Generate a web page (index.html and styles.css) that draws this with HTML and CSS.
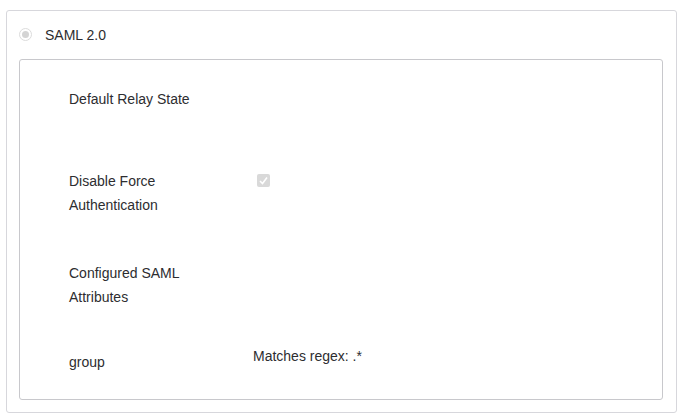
FILE: index.html
```html
<!DOCTYPE html>
<html>
<head>
<meta charset="utf-8">
<link rel="stylesheet" href="styles.css">
</head>
<body>
<div class="outer">
  <div class="head">
    <span class="radio"><span class="dot"></span></span>
    <span class="title">SAML 2.0</span>
  </div>
  <div class="inner">
    <div class="row r1">
      <div class="label">Default Relay State</div>
      <div class="value"></div>
    </div>
    <div class="row r2">
      <div class="label">Disable Force<br>Authentication</div>
      <div class="value"><span class="check"><svg width="11" height="11" viewBox="0 0 11 11"><path d="M2 6 L4.5 8.5 L9 2.5" fill="none" stroke="#fff" stroke-width="1.6"/></svg></span></div>
    </div>
    <div class="row r3">
      <div class="label">Configured SAML<br>Attributes</div>
      <div class="value"></div>
    </div>
    <div class="row r4">
      <div class="label g">group</div>
      <div class="value m">Matches regex: .*</div>
    </div>
  </div>
</div>
</body>
</html>
```
FILE: styles.css
```css
html, body { margin: 0; padding: 0; background: #fff; }
body {
  font-family: "Liberation Sans", Arial, sans-serif;
  color: #2d2d30;
  font-size: 14px;
  padding: 10px 9px 6px 6px;
}
.outer {
  border: 1px solid #d7d7dc;
  border-radius: 3px;
  height: 403px;
  box-sizing: border-box;
  padding: 0 13px 0 12px;
}
.head {
  display: flex;
  align-items: center;
  height: 47px;
}
.radio {
  width: 11px; height: 11px;
  border: 1px solid #dcdcdc;
  border-radius: 50%;
  display: flex; align-items: center; justify-content: center;
}
.dot { width: 7px; height: 7px; border-radius: 50%; background: #d4d4d4; }
.title { margin-left: 13px; font-size: 14px; }
.inner {
  border: 1px solid #c8c8cc;
  border-radius: 3px;
  height: 341px;
  box-sizing: border-box;
  padding: 27px 0 0 49px;
  margin-top: 1px;
}
.row { display: flex; line-height: 24px; }
.label { width: 184px; }
.r1 { height: 82px; }
.r2 { height: 92px; }
.r3 { height: 83px; }
.check {
  display: inline-block;
  width: 13px; height: 13px;
  background: #d9d9d9;
  border-radius: 2px;
  margin: 5px 0 0 4px;
}
.check svg { display: block; margin: 1px; }
.g { padding-top: 6px; }
.m { margin-top: 0; }
```
